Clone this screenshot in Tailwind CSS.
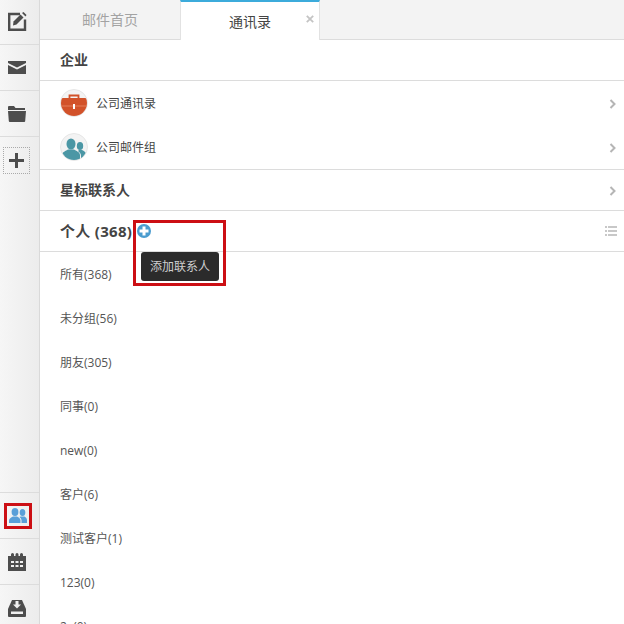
<!DOCTYPE html>
<html lang="zh">
<head>
  <meta charset="UTF-8">
  <title>通讯录</title>
  <script src="https://cdn.jsdelivr.net/npm/@tailwindcss/browser@4"></script>
</head>
<body class="bg-white font-['Open_Sans','Noto_Sans_CJK_SC',sans-serif] text-[#444]">
  <div class="flex h-[624px] w-[624px] overflow-hidden relative">
    <!-- Sidebar -->
    <aside class="w-[40px] shrink-0 h-full flex flex-col justify-between bg-gradient-to-r from-[#f6f6f6] to-[#ececec] border-r border-[#d9d9d9]">
      <div class="flex flex-col">
        <div class="h-[45px] pl-[8px] flex items-center border-b border-[#dcdcdc]">
          <svg width="19" height="19" viewBox="0 0 19 19" class="mt-[-1px]"><path d="M12 2H1.200v15.800H17V7.500" fill="none" stroke="#4d4d4d" stroke-width="2.400"/><path d="M5.500 9.500L12.500 2.500l3 3-7 7-3.500 1z" fill="#4d4d4d"/><path d="M14 1l1.500-1 3 3-1 1.500z" fill="#4d4d4d"/></svg>
        </div>
        <div class="h-[46px] pl-[8px] flex items-center border-b border-[#dcdcdc]">
          <svg width="18" height="13" viewBox="0 0 18 13"><path d="M0 0h18v2L9 6.500 0 2z" fill="#4d4d4d"/><path d="M0 4l9 4.500L18 4v9H0z" fill="#4d4d4d"/></svg>
        </div>
        <div class="h-[46px] pl-[8px] flex items-center border-b border-[#dcdcdc]">
          <svg width="18" height="16" viewBox="0 0 18 16"><path d="M0 1A1 1 0 0 1 1 0h5l1.500 2H17v2H0z" fill="#4d4d4d"/><path d="M0 5h18l-.8 10a1 1 0 0 1-1 1H1.800a1 1 0 0 1-1-1z" fill="#4d4d4d"/></svg>
        </div>
        <div class="h-[46px] pl-[3px] flex items-center">
          <div class="w-[27px] h-[27px] border border-dotted border-[#aaa] flex items-center justify-center">
            <svg width="15" height="15" viewBox="0 0 15 15"><path d="M6 0h3v6h6v3H9v6H6V9H0V6h6z" fill="#4d4d4d"/></svg>
          </div>
        </div>
      </div>
      <div class="flex flex-col">
        <div class="h-[46px] pl-[4px] flex items-center border-t border-[#dcdcdc]">
          <div class="w-[28px] h-[26px] border-[3px] border-[#cc0f14] flex items-center justify-center">
            <svg width="18" height="15" viewBox="0 0 18 15"><ellipse cx="6" cy="4" rx="3.400" ry="4" fill="#5a9fd8"/><path d="M0 15v-2.500c0-2 2-3 4-4h4c2 1 3.500 2 3.500 4V15z" fill="#5a9fd8"/><ellipse cx="13.500" cy="4.500" rx="2.800" ry="3.500" fill="#5a9fd8"/><path d="M12.500 15v-2.500c0-1.500-.8-2.500-2-3.500l1-.5h4c1.500 1 2.500 2 2.500 3.500V15z" fill="#5a9fd8"/></svg>
          </div>
        </div>
        <div class="h-[46px] pl-[8px] flex items-center border-t border-[#dcdcdc]">
          <svg width="18" height="18" viewBox="0 0 18 18"><path d="M0 3h3V1.500a1.500 1.500 0 0 1 3 0V3h1.500V1.500a1.500 1.500 0 0 1 3 0V3H12V1.500a1.500 1.500 0 0 1 3 0V3h3v15H0z" fill="#4d4d4d"/><path d="M3 8h3v2H3zM7.500 8h3v2h-3zM12 8h3v2h-3zM3 12h3v2H3zM7.500 12h3v2h-3zM12 12h3v2h-3z" fill="#f0f0f0"/></svg>
        </div>
        <div class="h-[40px] pl-[8px] pt-[15px] flex items-start border-t border-[#dcdcdc]">
          <svg width="18" height="17" viewBox="0 0 18 17"><path d="M4 0h10l4 9v7a1 1 0 0 1-1 1H1a1 1 0 0 1-1-1V9z" fill="#4d4d4d"/><path d="M7.500 1h3v3.500H13L9 8.500 5 4.500h2.500zM3 11.500h12V14H3z" fill="#f0f0f0"/></svg>
        </div>
      </div>
    </aside>

    <!-- Main -->
    <main class="flex-1 min-w-0">
      <div class="flex h-[40px] border-b border-[#dcdcdc] bg-[#f3f3f3]">
        <div class="w-[140px] flex items-center justify-center text-[14px] text-[#a3a3a3]">邮件首页</div>
        <div class="relative w-[140px] h-[40px] bg-white border-x border-[#e2e2e2] border-t-2 border-t-[#3cabdb] flex items-center justify-center text-[14px] text-[#444]">
          通讯录
          <svg width="8" height="8" viewBox="0 0 8 8" class="absolute right-[5px] top-[13px]"><path d="M.8.800l6.400 6.400M7.200.800L.8 7.200" stroke="#c4c4c4" stroke-width="1.800"/></svg>
        </div>
      </div>

      <div class="h-[41px] px-5 pb-[2px] flex items-center border-b border-[#dcdcdc] text-[14px] font-bold">企业</div>

      <div class="h-[44px] pl-5 pr-[8px] flex items-center text-[12px]">
        <svg width="28" height="28" viewBox="0 0 28 28" class="mr-[8px]"><clipPath id="round"><circle cx="14" cy="14" r="13"/></clipPath><circle cx="14" cy="14" r="13.500" fill="#f3f3f3" stroke="#e6e6e6"/><g clip-path="url(#round)"><path d="M1 11a2 2 0 0 1 2-2h22a2 2 0 0 1 2 2v17H1z" fill="#d2522a"/><path d="M1 17h26" stroke="#e88a68" stroke-width=".8"/></g><path d="M9.500 9V6.500h9V9" fill="none" stroke="#d2522a" stroke-width="1.800"/><rect x="13" y="15" width="2" height="5" fill="#fff"/></svg>
        <span class="flex-1 pt-[2px]">公司通讯录</span>
        <svg width="7" height="10" viewBox="0 0 7 10" class="mt-[1px]"><path d="M1.500 1l4 4-4 4" fill="none" stroke="#b5b5b5" stroke-width="2"/></svg>
      </div>
      <div class="h-[45px] pl-5 pr-[8px] flex items-center border-b border-[#dcdcdc] text-[12px]">
        <svg width="28" height="28" viewBox="0 0 28 28" class="mr-[8px]"><clipPath id="team"><circle cx="14" cy="14" r="13"/></clipPath><circle cx="14" cy="14" r="13.500" fill="#f3f3f3" stroke="#e6e6e6"/><g clip-path="url(#team)" fill="#4b97a5"><ellipse cx="11" cy="11" rx="4.500" ry="5.500"/><path d="M2 28v-6c0-3 4-4 6-5.500h6c2 1.500 6 2.500 6 5.500v6z"/><ellipse cx="20" cy="13" rx="3.200" ry="4"/><path d="M21 28v-5c0-2-1-3.500-3-5l1-1h3c2 1 4 2 4 4v7z"/></g></svg>
        <span class="flex-1 pt-[2px]">公司邮件组</span>
        <svg width="7" height="10" viewBox="0 0 7 10" class="mt-[1px]"><path d="M1.500 1l4 4-4 4" fill="none" stroke="#b5b5b5" stroke-width="2"/></svg>
      </div>

      <div class="h-[41px] pl-5 pr-[8px] flex items-center justify-between border-b border-[#dcdcdc] text-[14px] font-bold">
        <span class="pb-[2px]">星标联系人</span>
        <svg width="7" height="10" viewBox="0 0 7 10" class="mt-[1px]"><path d="M1.500 1l4 4-4 4" fill="none" stroke="#b5b5b5" stroke-width="2"/></svg>
      </div>

      <div class="h-[41px] pl-5 pr-[7px] flex items-center border-b border-[#dcdcdc] text-[15px] font-bold">
        <span class="tracking-[0.3px]">个人 (368)</span>
        <svg width="14" height="14" viewBox="0 0 14 14" class="ml-[5px]"><circle cx="7" cy="7" r="7" fill="#4b9ccf"/><path d="M5.500 2.500h3v3h3v3h-3v3h-3v-3h-3v-3h3z" fill="#fff"/></svg>
        <svg width="12" height="10" viewBox="0 0 12 10" class="ml-auto"><path d="M0 0h2v2H0zM3 0h9v2H3zM0 4h2v2H0zM3 4h9v2H3zM0 8h2v2H0zM3 8h9v2H3z" fill="#c8c8c8"/></svg>
      </div>

      <ul class="text-[12px] text-[#555]">
        <li class="h-[44px] pl-5 pt-[2px] flex items-center">所有(368)</li>
        <li class="h-[44px] pl-5 pt-[2px] flex items-center">未分组(56)</li>
        <li class="h-[44px] pl-5 pt-[2px] flex items-center">朋友(305)</li>
        <li class="h-[44px] pl-5 pt-[2px] flex items-center">同事(0)</li>
        <li class="h-[44px] pl-5 pt-[2px] flex items-center">new(0)</li>
        <li class="h-[44px] pl-5 pt-[2px] flex items-center">客户(6)</li>
        <li class="h-[44px] pl-5 pt-[2px] flex items-center">测试客户(1)</li>
        <li class="h-[44px] pl-5 pt-[2px] flex items-center">123(0)</li>
        <li class="h-[44px] pl-5 pt-[2px] flex items-center">2x(0)</li>
      </ul>
    </main>

    <!-- Tooltip and annotation over the list -->
    <div class="absolute left-[141px] top-[252px] w-[78px] h-[29px] bg-[#2b2b2b] rounded-[3px] flex items-center justify-center text-[12px] text-[#cfcfcf]">添加联系人</div>
    <div class="absolute left-[133px] top-[220px] w-[93px] h-[66px] border-[3px] border-[#cc0f14]"></div>
  </div>
</body>
</html>
